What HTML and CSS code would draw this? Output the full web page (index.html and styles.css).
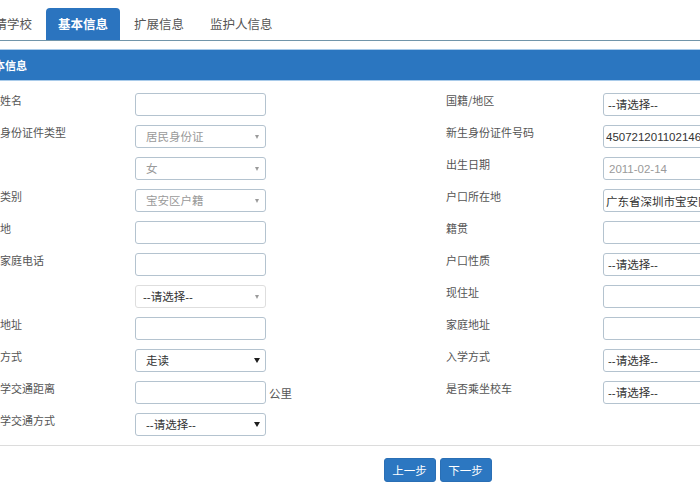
FILE: index.html
```html
<!DOCTYPE html>
<html lang="zh-CN">
<head>
<meta charset="utf-8">
<title>基本信息</title>
<link rel="stylesheet" href="styles.css">
</head>
<body>
<div class="page">
  <ul class="tabs">
    <li class="tab">申请学校</li>
    <li class="tab active">基本信息</li>
    <li class="tab">扩展信息</li>
    <li class="tab">监护人信息</li>
  </ul>
  <div class="panel-head">基本信息</div>
  <div class="form">
    <div class="field"><label>学生姓名</label><input class="ctl" type="text" value=""></div>
    <div class="field"><label>国籍/地区</label><span class="sel wide"><select class="ctl r"><option>--请选择--</option></select></span></div>

    <div class="field"><label>新生身份证件类型</label><span class="sel dis"><select class="ctl" disabled><option>居民身份证</option></select></span></div>
    <div class="field"><label>新生身份证件号码</label><input class="ctl r wide" type="text" value="450721201102146125"></div>

    <div class="field"><label>性别</label><span class="sel dis"><select class="ctl" disabled><option>女</option></select></span></div>
    <div class="field"><label>出生日期</label><input class="ctl r wide muted" type="text" value="2011-02-14" disabled></div>

    <div class="field"><label>户籍类别</label><span class="sel dis"><select class="ctl" disabled><option>宝安区户籍</option></select></span></div>
    <div class="field"><label>户口所在地</label><input class="ctl r wide" type="text" value="广东省深圳市宝安区"></div>

    <div class="field"><label>出生地</label><input class="ctl" type="text" value=""></div>
    <div class="field"><label>籍贯</label><input class="ctl r wide" type="text" value=""></div>

    <div class="field"><label>联系家庭电话</label><input class="ctl" type="text" value=""></div>
    <div class="field"><label>户口性质</label><span class="sel wide"><select class="ctl r"><option>--请选择--</option></select></span></div>

    <div class="field"><label>民族</label><span class="sel dis light"><select class="ctl light"><option>--请选择--</option></select></span></div>
    <div class="field"><label>现住址</label><input class="ctl r wide" type="text" value=""></div>

    <div class="field"><label>通讯地址</label><input class="ctl" type="text" value=""></div>
    <div class="field"><label>家庭地址</label><input class="ctl r wide" type="text" value=""></div>

    <div class="field"><label>就读方式</label><span class="sel dark"><select class="ctl"><option>走读</option></select></span></div>
    <div class="field"><label>入学方式</label><span class="sel wide"><select class="ctl r"><option>--请选择--</option></select></span></div>

    <div class="field"><label>上下学交通距离</label><input class="ctl" type="text" value=""><span class="unit">公里</span></div>
    <div class="field"><label>是否乘坐校车</label><span class="sel wide"><select class="ctl r"><option>--请选择--</option></select></span></div>

    <div class="field"><label>上下学交通方式</label><span class="sel dark"><select class="ctl"><option>--请选择--</option></select></span></div>
  </div>
  <div class="actions">
    <button class="btn" type="button">上一步</button>
    <button class="btn" type="button">下一步</button>
  </div>
</div>
</body>
</html>
```
FILE: styles.css
```css
html, body {
  margin: 0;
  padding: 0;
  background: #fff;
  overflow: hidden;
}
body {
  width: 700px;
  height: 500px;
  font-family: "Noto Sans CJK SC", "Liberation Sans", sans-serif;
  color: #555;
}
.page {
  margin-left: -30px;
  width: 935px;
}
.tabs {
  list-style: none;
  margin: 0;
  padding: 8px 0 0 0;
  display: flex;
  border-bottom: 1px solid #7195aa;
}
.tab {
  height: 32px;
  line-height: 32px;
  padding: 0 12px;
  margin-right: 2px;
  font-size: 12.5px;
  color: #555;
}
.tab.active {
  background: #2b74bf;
  color: #fff;
  font-weight: bold;
  border-radius: 4px 4px 0 0;
}
.panel-head {
  margin-top: 8px;
  height: 30px;
  line-height: 30px;
  padding-left: 13px;
  background: #2b76c0;
  border-top: 1px solid #a9cbea;
  border-bottom: 1px solid #a9cbea;
  color: #fff;
  font-weight: bold;
  font-size: 11px;
}
.form {
  display: grid;
  grid-template-columns: 468px 1fr;
  row-gap: 9px;
  padding: 12px 0 9px 8px;
  border-bottom: 1px solid #dcdcdc;
}
.field {
  display: flex;
  align-items: flex-start;
  height: 23px;
}
.field label {
  flex: none;
  width: 157px;
  font-size: 11px;
  line-height: 15px;
  color: #555;
  white-space: nowrap;
}
.ctl {
  display: block;
  box-sizing: border-box;
  width: 131px;
  height: 23px;
  margin: 0;
  padding: 0 10px;
  border: 1px solid #b4c3cf;
  border-radius: 3px;
  background: #fff;
  font-family: "Liberation Sans", "Noto Sans CJK SC", sans-serif;
  font-size: 11.5px;
  color: #333;
  outline: none;
  -webkit-appearance: none;
  appearance: none;
}
.ctl.r {
  padding-left: 2px;
}
select.ctl.r {
  padding-left: 4px;
}
.ctl.muted, .ctl:disabled {
  color: #9a9a9a;
  background: #fff;
  opacity: 1;
}
.ctl.r.muted {
  padding-left: 5px;
}
.ctl.light {
  border-color: #dedede;
  color: #333;
  padding-left: 7px;
}
.sel {
  position: relative;
  display: block;
  width: 131px;
  height: 23px;
}
.sel::after {
  content: "";
  position: absolute;
  top: 10px;
  right: 7px;
  width: 0;
  height: 0;
  border-left: 2.5px solid transparent;
  border-right: 2.5px solid transparent;
  border-top: 4px solid #9a9a9a;
  pointer-events: none;
}
.sel.dark::after {
  top: 9px;
  right: 6px;
  border-left-width: 3px;
  border-right-width: 3px;
  border-top: 5px solid #1e1e1e;
}
.sel.wide::after {
  display: none;
}
.unit {
  margin-left: 3px;
  padding-top: 2px;
  font-size: 11.5px;
  line-height: 21px;
  color: #555;
}
.actions {
  display: flex;
  justify-content: center;
  gap: 4px;
  margin-top: 12px;
}
.btn {
  box-sizing: border-box;
  width: 52px;
  height: 24px;
  padding: 0;
  border: 1px solid #2a6fb5;
  border-radius: 3px;
  background: #2c77c1;
  color: #fff;
  font-family: "Noto Sans CJK SC", sans-serif;
  font-size: 11.5px;
}
```
